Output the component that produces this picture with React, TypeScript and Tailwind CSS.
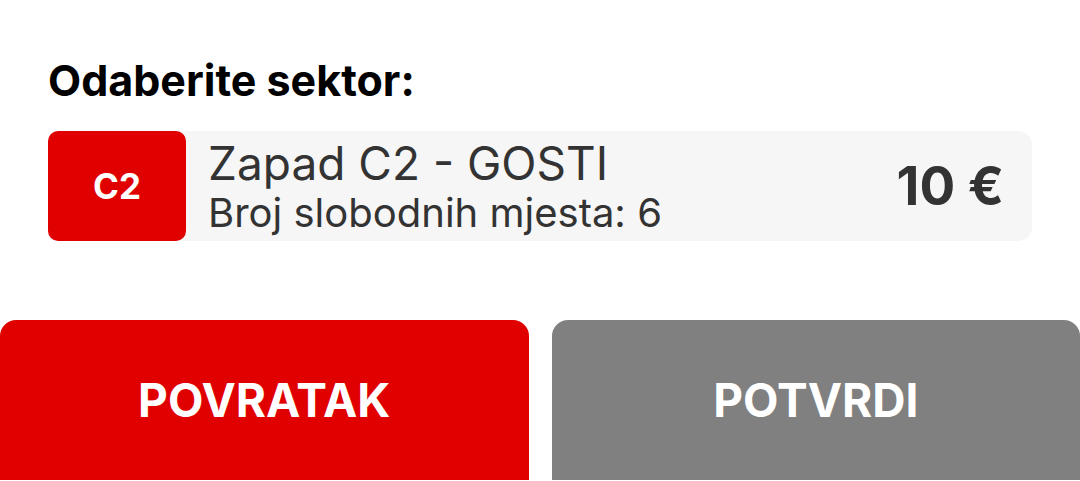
export default function App() {
  return (
    <div className="min-h-screen bg-white font-['Inter',sans-serif]">
      <div className="px-12 pt-[56px]">
        <h2 className="text-[43px] leading-[48px] font-bold text-black">Odaberite sektor:</h2>

        {/* Sector card */}
        <div className="mt-[27px] flex h-[110px] rounded-[14px] bg-[#f6f6f6]">
          <div className="flex w-[138px] items-center justify-center rounded-[10px] bg-[#e00000]">
            <span className="text-[35px] font-bold text-white">C2</span>
          </div>
          <div className="flex flex-1 items-center justify-between pl-[22px] pr-[28px]">
            <div className="flex flex-col gap-[3px]">
              <span className="text-[46px] leading-[50px] text-[#333333]">Zapad C2 - GOSTI</span>
              <span className="text-[40px] leading-[44px] text-[#333333]">Broj slobodnih mjesta: 6</span>
            </div>
            <span className="text-[53px] leading-[58px] font-bold text-[#333333]">10 €</span>
          </div>
        </div>
      </div>

      {/* Actions */}
      <div className="mt-[79px] flex gap-[23px]">
        <button className="flex h-[160px] flex-1 items-center justify-center rounded-t-[16px] bg-[#e00000] text-[46px] font-bold text-white">
          POVRATAK
        </button>
        <button className="flex h-[160px] flex-1 items-center justify-center rounded-t-[16px] bg-[#808080] text-[46px] font-bold text-white">
          POTVRDI
        </button>
      </div>
    </div>
  );
}
